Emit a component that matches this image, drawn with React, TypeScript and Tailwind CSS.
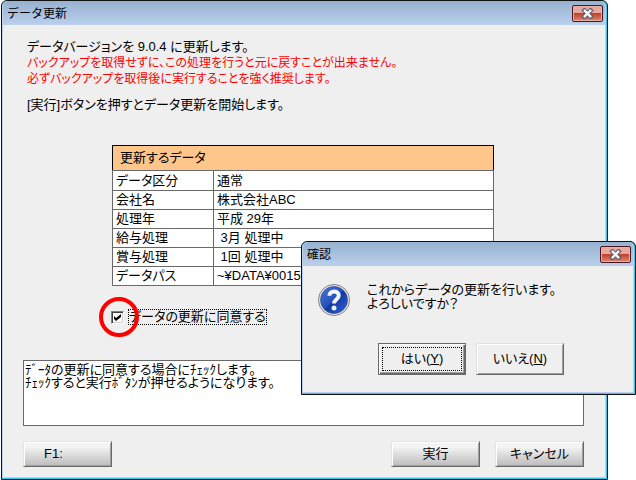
import { useState } from "react";
import type { ReactNode } from "react";

const rows = [
  { label: "データ区分", value: "通常" },
  { label: "会社名", value: "株式会社ABC" },
  { label: "処理年", value: "平成 29年" },
  { label: "給与処理", value: " 3月 処理中" },
  { label: "賞与処理", value: " 1回 処理中" },
  { label: "データパス", value: "~¥DATA¥0015" },
];

const note =
  "ﾃﾞｰﾀの更新に同意する場合にﾁｪｯｸします。\nﾁｪｯｸすると実行ﾎﾞﾀﾝが押せるようになります。";

function TitleBar({ title }: { title: string }) {
  return (
    <header className="flex h-6 items-center justify-between bg-linear-to-b from-[#98b1d0] to-[#b9d1ec] pr-0.5 pl-1">
      <h2 className="pt-0.5 text-xs leading-4 [font-feature-settings:normal]">{title}</h2>
      <button
        type="button"
        aria-label="閉じる"
        className="flex h-[17px] w-[31px] items-center justify-center rounded-xs border border-[#4a1420] bg-linear-to-b from-[#e8a89e] from-45% via-[#c0402a] via-50% to-[#d98873] shadow-[inset_0_0_0_1px_#e9b0a5]"
      >
        <svg width="13" height="11" viewBox="0 0 13 11">
          <path d="M3.5 2.5 L9.5 8.5 M9.5 2.5 L3.5 8.5" stroke="#565c6a" strokeWidth="4.4" strokeLinecap="square" />
          <path d="M3.7 2.7 L9.3 8.3 M9.3 2.7 L3.7 8.3" stroke="#f5f5f5" strokeWidth="2.4" strokeLinecap="square" />
        </svg>
      </button>
    </header>
  );
}

function FormButton({ children }: { children: ReactNode }) {
  return (
    <button
      type="button"
      className="h-[26px] w-[89px] border border-t-[#e3e3e3] border-r-[#696969] border-b-[#696969] border-l-[#e3e3e3] bg-linear-to-b from-[#f4f4f4] from-20% to-[#bcbcbc] leading-4 shadow-[inset_1px_1px_0_#fff,inset_-1px_-1px_0_#a0a0a0]"
    >
      {children}
    </button>
  );
}

function QuestionIcon() {
  return (
    <svg width="34" height="34" viewBox="0 0 34 34" className="shrink-0">
      <defs>
        <linearGradient id="ball" x1="0" y1="0" x2="1" y2="1">
          <stop offset="0" stopColor="#4a78dc" />
          <stop offset="0.48" stopColor="#2450bd" />
          <stop offset="0.52" stopColor="#1238a0" />
          <stop offset="1" stopColor="#3564d8" />
        </linearGradient>
      </defs>
      <circle cx="17" cy="17" r="15.5" fill="#e4e4e4" stroke="#858585" />
      <circle cx="17" cy="17" r="13.5" fill="url(#ball)" stroke="#23408c" strokeWidth="0.6" />
      <path
        d="M12.4 12.8 C12.4 7.2 21.8 7.3 21.8 12.5 C21.8 16.2 17 16.2 17 20.6"
        fill="none"
        stroke="#f4f6fb"
        strokeWidth="4"
      />
      <circle cx="17" cy="25" r="2.5" fill="#e8ecf6" />
    </svg>
  );
}

function ConfirmDialog() {
  return (
    <section
      role="dialog"
      aria-label="確認"
      className="absolute top-[241px] right-0 w-[335px] rounded-t-md border border-[#111] bg-[#35c8ea]"
    >
      <div className="mr-px mb-px overflow-hidden rounded-t-md border-r border-b border-l border-[#b9d1ec] bg-[#efefef]">
        <TitleBar title="確認" />
        <div className="flex gap-4 px-3.5 pt-[17px]">
          <QuestionIcon />
          <p className="leading-[14px]">
            これからデータの更新を行います。
            <br />
            よろしいですか？
          </p>
        </div>
        <div className="flex justify-center gap-2.5 pt-[26px] pb-[17px] pl-1.5">
          <button
            type="button"
            className="h-8 w-[88px] border border-[#696969] p-[3px] shadow-[inset_1px_1px_0_#fff,inset_-1px_-1px_0_#696969,inset_-2px_-2px_0_#a0a0a0]"
          >
            <span className="flex h-full items-center justify-center border border-dotted border-black">
              はい(<u>Y</u>)
            </span>
          </button>
          <button
            type="button"
            className="h-8 w-[88px] border border-t-[#e3e3e3] border-r-[#696969] border-b-[#696969] border-l-[#e3e3e3] shadow-[inset_1px_1px_0_#fff,inset_-1px_-1px_0_#a0a0a0]"
          >
            いいえ(<u>N</u>)
          </button>
        </div>
      </div>
    </section>
  );
}

export default function App() {
  const [agreed, setAgreed] = useState(true);

  return (
    <div className="relative bg-white font-['Liberation_Sans','Noto_Sans_CJK_JP',sans-serif] text-[13px] text-black [font-feature-settings:'palt']">
      <main className="mr-7 ml-px rounded-t-md border border-[#111] bg-[#35c8ea]">
        <div className="mr-px mb-px overflow-hidden rounded-t-md border-r border-b border-l border-[#b9d1ec] bg-[#efefef]">
          <TitleBar title="データ更新" />

          <div className="pr-[21px] pb-2.5 pl-5">
            <div className="px-1 pt-3.5 leading-4">
              <p>データバージョンを 9.0.4 に更新します。</p>
              <p className="text-xs leading-4 text-[#f00]">
                バックアップを取得せずに、この処理を行うと元に戻すことが出来ません。
                <br />
                必ずバックアップを取得後に実行することを強く推奨します。
              </p>
              <p className="mt-2.5">[実行]ボタンを押すとデータ更新を開始します。</p>
            </div>

            <table className="mt-8 mr-[89px] ml-[89px] w-[382px] table-fixed border-collapse bg-white text-left leading-4">
              <colgroup>
                <col className="w-[101px]" />
                <col />
              </colgroup>
              <thead>
                <tr className="h-[25px]">
                  <th colSpan={2} className="border border-black border-b-[#696969] bg-[#ffc68c] px-[7px] font-normal">
                    更新するデータ
                  </th>
                </tr>
              </thead>
              <tbody>
                {rows.map((row) => (
                  <tr key={row.label} className="h-[19px] first:h-5">
                    <th scope="row" className="border border-[#696969] px-[3px] py-0 font-normal">
                      {row.label}
                    </th>
                    <td className="border border-[#696969] px-[3px] py-0 whitespace-pre">{row.value}</td>
                  </tr>
                ))}
              </tbody>
            </table>

            <div className="relative mt-[23px] ml-[88px] flex items-center gap-1">
              <span className="grid">
                <input
                  id="agree"
                  type="checkbox"
                  checked={agreed}
                  onChange={(e) => setAgreed(e.target.checked)}
                  className="peer col-start-1 row-start-1 size-[13px] appearance-none border border-t-[#808080] border-r-white border-b-white border-l-[#808080] bg-white shadow-[inset_1px_1px_0_#404040,inset_-1px_-1px_0_#d4d0c8]"
                />
                <svg
                  viewBox="0 0 13 13"
                  className="pointer-events-none invisible col-start-1 row-start-1 size-[13px] peer-checked:visible"
                >
                  <path d="M3 5 L5 7 L10 3 V6 L5 10 L3 8 Z" />
                </svg>
              </span>
              <label htmlFor="agree" className="border border-dotted border-black leading-[14px]">
                データの更新に同意する
              </label>
              {/* red marker around the check box */}
              <span className="pointer-events-none absolute -top-3 -left-3 size-10 rounded-full border-4 border-[#f00]" />
            </div>

            <textarea
              readOnly
              aria-label="説明"
              value={note}
              className="mt-[35px] block h-[66px] w-full resize-none overflow-hidden border border-[#696969] bg-white px-px py-0.5 leading-[13px] outline-none"
            />

            <div className="mt-[15px] flex gap-[15px]">
              <div className="mr-auto">
                <FormButton>
                  <span className="block pl-5 text-left">F1:</span>
                </FormButton>
              </div>
              <FormButton>実行</FormButton>
              <FormButton>キャンセル</FormButton>
            </div>
          </div>
        </div>
      </main>

      <ConfirmDialog />
    </div>
  );
}
